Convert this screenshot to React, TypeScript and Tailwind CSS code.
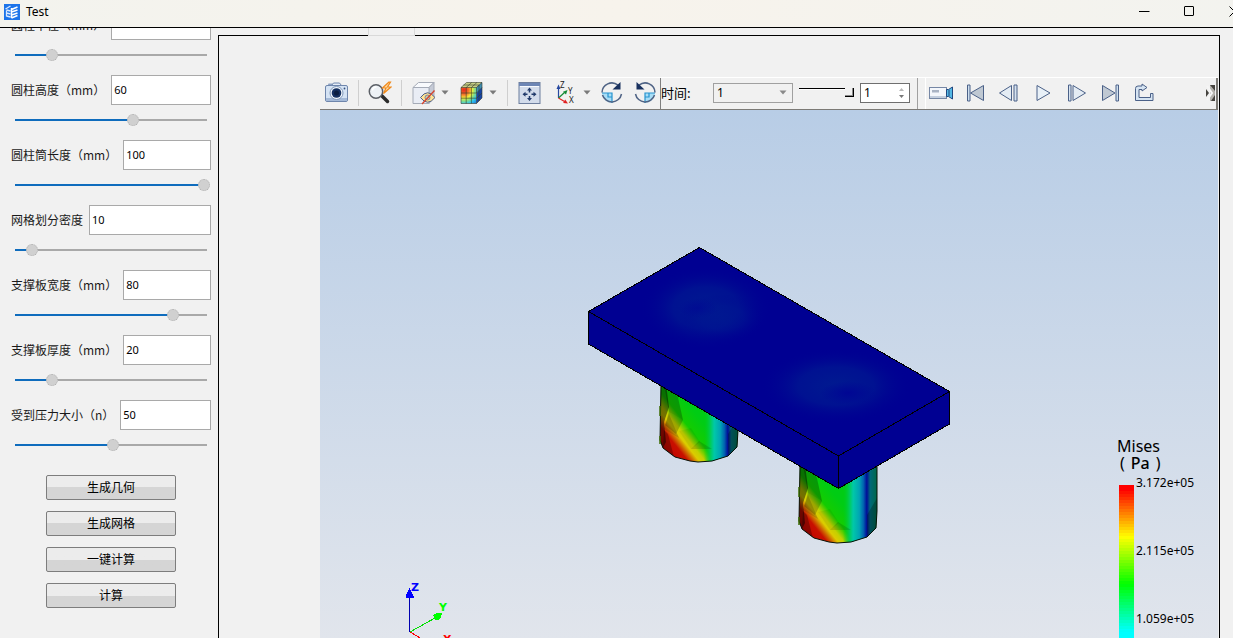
import { useState } from 'react';
import type { ReactNode } from 'react';

const params = [
  { id: 'radius', label: '圆柱半径（mm）', value: '', percent: 17 },
  { id: 'height', label: '圆柱高度（mm）', value: '60', percent: 61 },
  { id: 'length', label: '圆柱筒长度（mm）', value: '100', percent: 100 },
  { id: 'density', label: '网格划分密度', value: '10', percent: 6 },
  { id: 'width', label: '支撑板宽度（mm）', value: '80', percent: 83 },
  { id: 'thickness', label: '支撑板厚度（mm）', value: '20', percent: 17 },
  { id: 'pressure', label: '受到压力大小（n）', value: '50', percent: 50 },
];

const actions = ['生成几何', '生成网格', '一键计算', '计算'];

const legendTicks = ['3.172e+05', '2.115e+05', '1.059e+05'];

function ParamRow({ id, label, value, percent }: (typeof params)[number]) {
  const [pos, setPos] = useState(percent);
  // keep the fill under the middle of the thumb
  const fill = `calc(6px + (100% - 12px) * ${pos / 100})`;

  return (
    <div className="h-[65px]">
      <div className="flex h-[30px] items-center gap-1.5 pr-[7px] pl-[11px]">
        <label htmlFor={id} className="text-xs leading-[14px] whitespace-nowrap text-[#1a1a1a]">
          {label}
        </label>
        <input
          id={id}
          type="text"
          defaultValue={value}
          className="h-full min-w-0 flex-1 border border-[#a9a9a9] bg-white px-0.5 pb-0.5 font-['Noto_Sans'] text-[11px] text-black outline-none"
        />
      </div>
      <div className="flex h-[30px] items-center pr-2 pl-[15px]">
        <input
          type="range"
          aria-label={label}
          value={pos}
          onChange={(e) => setPos(Number(e.target.value))}
          style={{
            backgroundImage: `linear-gradient(to right, #0f6cbd ${fill}, #a9a9a9 ${fill}, #a9a9a9 calc(100% - 3px), transparent calc(100% - 3px))`,
          }}
          className="h-3 w-full appearance-none bg-[length:100%_2px] bg-center bg-no-repeat [&::-webkit-slider-thumb]:size-3 [&::-webkit-slider-thumb]:appearance-none [&::-webkit-slider-thumb]:rounded-full [&::-webkit-slider-thumb]:border [&::-webkit-slider-thumb]:border-dotted [&::-webkit-slider-thumb]:border-[#b0b0b0] [&::-webkit-slider-thumb]:bg-[#d0d0d0]"
        />
      </div>
    </div>
  );
}

function ToolButton({ label, wide, children }: { label: string; wide?: boolean; children: ReactNode }) {
  return (
    <button type="button" aria-label={label} className={wide ? 'h-6 w-7 shrink-0' : 'size-6 shrink-0'}>
      <svg className="h-full w-full" viewBox={wide ? '0 0 28 24' : '0 0 24 24'} fill="none">
        {children}
      </svg>
    </button>
  );
}

function MenuArrow({ label }: { label: string }) {
  return (
    <button type="button" aria-label={label} className="w-[10px] shrink-0">
      <svg className="w-full" viewBox="0 0 10 5">
        <path d="M1.500 0.500h7L5 4.500z" fill="#7a7a7a" />
      </svg>
    </button>
  );
}

function Separator() {
  return <div className="h-[26px] w-px shrink-0 bg-[#cfcfcf]" />;
}

function ViewTools() {
  return (
    <div className="flex shrink-0 items-center gap-[9px] border-r border-[#7f7f7f] pr-0.5 pb-0.5 pl-[5px]">
      <ToolButton label="截图">
        <rect x="3" y="2.500" width="5" height="3" rx="1" fill="#8fa3c4" />
        <rect x="0.500" y="4.500" width="22" height="16" rx="1.500" fill="#d5e3f4" stroke="#6f86ac" />
        <path d="M6.500 4.500l2-2.500h6l2 2.500z" fill="#e5edf8" stroke="#6f86ac" />
        <path d="M1 17h21v3H1z" fill="#a5bad8" />
        <circle cx="11.500" cy="12" r="6.500" fill="#f2f7fc" stroke="#7f96b8" />
        <circle cx="11.500" cy="12" r="4.800" fill="#142f60" />
        <circle cx="11.500" cy="12" r="2.500" fill="#0a1d40" />
        <circle cx="19.500" cy="7.500" r="0.900" fill="#35507d" />
      </ToolButton>
      <Separator />
      <ToolButton label="缩放">
        <path d="M13 14l6.500 6.500" stroke="#2b2b2b" strokeWidth="3.500" strokeLinecap="round" />
        <circle cx="8" cy="10.500" r="6.700" fill="#eef2f6" stroke="#5b5f66" strokeWidth="1.500" />
        <path d="M4.500 9.500a4 4 0 0 1 4-3.500" stroke="#fff" strokeWidth="1.500" />
        <path d="M21 1l-6.500 6h3.500l-2.500 5.500L23 6h-3.500L22.500 1z" fill="#ffd9a0" stroke="#f08a1c" strokeWidth="1.200" />
      </ToolButton>
      <Separator />
      <div className="flex items-center gap-[5px]">
        <ToolButton label="隐藏">
          <path d="M2 6.500L7.500 1.500H23L18 6.500z" fill="#f8fafd" stroke="#a5abb7" />
          <path d="M18 6.500l5-5V16l-5 6.500z" fill="#c5cad6" stroke="#a5abb7" />
          <path d="M2 6.500h16v16H2z" fill="#e9edf5" stroke="#a5abb7" />
          <path d="M9.500 16.500q7-9.500 14.500 0q-7.500 9.500-14.500 0z" fill="#ffe394" stroke="#4e5f8a" />
          <circle cx="16.500" cy="16.500" r="2.500" fill="#c3c9b4" stroke="#6a7590" strokeWidth="0.800" />
          <path d="M23.500 9.500L11 23" stroke="#d8432b" strokeWidth="1.300" />
        </ToolButton>
        <MenuArrow label="隐藏选项" />
      </div>
      <div className="flex items-center gap-[5px]">
        <ToolButton label="云图">
          <defs>
            <radialGradient id="cubeFace" gradientUnits="userSpaceOnUse" cx="5" cy="9" r="18">
              <stop offset="0" stopColor="#e8251d" />
              <stop offset="0.250" stopColor="#f6722a" />
              <stop offset="0.450" stopColor="#f4ef3a" />
              <stop offset="0.600" stopColor="#8fe07a" />
              <stop offset="0.780" stopColor="#2fc5ec" />
              <stop offset="1" stopColor="#1a74dd" />
            </radialGradient>
          </defs>
          <path d="M2 6.500L7.500 1.500H23L17.500 6.500z" fill="#c8cf86" />
          <path d="M17.500 6.500L23 1.500V17l-5.500 5.500z" fill="#1745a8" />
          <path d="M17.500 6.500L23 1.500v5l-5.500 6z" fill="#3f8fb3" />
          <path d="M2 6.500h15.500v16H2z" fill="url(#cubeFace)" />
          <path
            d="M2 6.500h15.500v16H2zM2 12h15.500L23 6.500M2 17.200h15.500L23 12M7.200 22.500v-16l5.500-5M12.400 22.500v-16l5.500-5M2 6.500l5.500-5H23V17l-5.500 5.500M17.500 6.500l5.500-5M4.500 4h15.500v16"
            stroke="#343a28"
            strokeWidth="0.600"
          />
        </ToolButton>
        <MenuArrow label="云图选项" />
      </div>
      <Separator />
      <ToolButton label="适应窗口">
        <rect x="2" y="1.500" width="21" height="21" fill="#d3dceb" stroke="#6d7e9e" />
        <path d="M2 2h21v3H2z" fill="#6d86b5" />
        <path d="M3 5.500h19" stroke="#f6f9fd" />
        <path d="M12.500 6.500l2.500 3h-5zM12.500 20l2.500-3h-5zM5.500 13.200l3-2.500v5zM19.500 13.200l-3-2.500v5z" fill="#213a6b" />
        <path d="M12.500 9v2.500M12.500 15v2.500M8 13.200h2.500M14.500 13.200H17" stroke="#213a6b" strokeWidth="1.500" />
      </ToolButton>
      <div className="flex items-center gap-[4px]">
        <ToolButton label="视图方向" wide>
          <path d="M8.500 17V7" stroke="#2748a0" strokeWidth="1.200" />
          <path d="M8.500 3.500l2 4.500h-4z" fill="#2748a0" />
          <path d="M8.500 17l6-5.500" stroke="#138a35" strokeWidth="1.200" />
          <path d="M17.500 9l-1.500 4.500-3-2.800z" fill="#138a35" />
          <path d="M8.500 17l6 3.500" stroke="#e02020" strokeWidth="1.200" />
          <path d="M18 22.500l-4.800-.5 2-3.500z" fill="#e02020" />
          <g fill="#222" className="font-['Noto_Sans'] text-[8px]">
            <text x="10" y="7">Z</text>
            <text x="18" y="13">Y</text>
            <text x="19" y="22">X</text>
          </g>
        </ToolButton>
        <MenuArrow label="视图选项" />
      </div>
      <ToolButton label="顺时针旋转">
        <path d="M1 12h10v10A10 10 0 0 1 1 12z" fill="#a8ddf6" />
        <path d="M1 12h10v10M7 12v4h4" stroke="#2694cf" strokeWidth="1.200" />
        <path d="M1 11.500A9.800 9.800 0 0 1 17 4.200M20.500 13A9.800 9.800 0 0 1 1.500 14" stroke="#4f6385" strokeWidth="1.500" />
        <path d="M19.500 1v7.500h-8z" fill="#19315f" />
      </ToolButton>
      <ToolButton label="逆时针旋转">
        <path d="M21 12H11v10A10 10 0 0 0 21 12z" fill="#a8ddf6" />
        <path d="M21 12H11v10M15 12v4h-4" stroke="#2694cf" strokeWidth="1.200" />
        <path d="M21 11.500A9.800 9.800 0 0 0 5 4.200M1.500 13A9.800 9.800 0 0 0 20.500 14" stroke="#4f6385" strokeWidth="1.500" />
        <path d="M2.500 1v7.500h8z" fill="#19315f" />
      </ToolButton>
    </div>
  );
}

function TimeTools() {
  return (
    <div className="flex shrink-0 items-center border-r border-[#a0a0a0] pr-[7px] pb-0.5">
      <label htmlFor="time" className="w-[52px] text-[13px] text-black">
        时间:
      </label>
      <div className="relative">
        <select
          id="time"
          className="block h-5 w-20 appearance-none border border-[#a0a0a0] bg-[#f1f1f1] px-[3px] font-['Noto_Sans'] text-xs leading-none text-black"
        >
          <option>1</option>
        </select>
        <svg className="pointer-events-none absolute top-[7px] right-[6px] h-[5px] w-[8px]" viewBox="0 0 8 5">
          <path d="M0.500 0.500h7L4 4.500z" fill="#8a8a8a" />
        </svg>
      </div>
      <input
        type="range"
        aria-label="时间步"
        defaultValue={100}
        className="mx-1.5 h-[9px] w-[55px] appearance-none bg-[linear-gradient(to_bottom,#000_1px,#fff_1px,#fff_2px,transparent_2px)] [&::-webkit-slider-thumb]:size-[9px] [&::-webkit-slider-thumb]:appearance-none [&::-webkit-slider-thumb]:border-r [&::-webkit-slider-thumb]:border-b [&::-webkit-slider-thumb]:border-black [&::-webkit-slider-thumb]:bg-[#f1f1f1] [&::-webkit-slider-thumb]:shadow-[inset_-1px_-1px_0_#8a8a8a]"
      />
      <div className="relative">
        <input
          type="text"
          aria-label="帧"
          defaultValue="1"
          className="block h-5 w-[50px] border border-[#6f6f6f] bg-white px-[3px] font-['Noto_Sans'] text-xs text-black outline-none"
        />
        <svg className="pointer-events-none absolute top-1 right-1.5 h-3 w-[5px]" viewBox="0 0 5 12">
          <path d="M2.500 1L5 4H0z" fill="#b9b9b9" />
          <path d="M2.500 11L5 8H0z" fill="#777" />
        </svg>
      </div>
    </div>
  );
}

function PlayTools() {
  const line = '#4b6188';
  return (
    <div className="ml-[7px] flex min-w-0 flex-1 items-center gap-[10px] overflow-hidden border-r-2 border-l border-r-[#7c7a76] border-l-white pb-0.5 pl-[3px]">
      <ToolButton label="录制">
        <rect x="0.500" y="6.500" width="17" height="11" fill="#f3f6fb" stroke="#7687a5" />
        <path d="M1 15h16v2H1z" fill="#c3cede" />
        <path d="M3 9h7v2.500H3z" fill="#a9b3c4" />
        <path d="M17.500 8.500h2L23.500 6v12l-4-2.500h-2z" fill="#54b8e4" stroke="#21477f" />
        <path d="M20 9v6" stroke="#21477f" />
      </ToolButton>
      <ToolButton label="第一帧">
        <path d="M4.500 4v16h2.500V4z" fill="#cfe0ef" stroke={line} />
        <path d="M20.500 4.500v15L7.500 12z" fill="#bfc8d2" stroke={line} />
      </ToolButton>
      <ToolButton label="上一帧">
        <path d="M14.500 4.500v15L2.500 12z" fill="#e4ecf4" stroke={line} />
        <path d="M17 4v16h3V4z" fill="#d7e3f0" stroke={line} />
      </ToolButton>
      <ToolButton label="播放">
        <path d="M6 4.500v15L19 12z" fill="#e9f1f8" stroke={line} />
      </ToolButton>
      <ToolButton label="下一帧">
        <path d="M3.500 4v16h2.500V4z" fill="#d7e3f0" stroke={line} />
        <path d="M8 4.500v15L20.500 12z" fill="#e4ecf4" stroke={line} />
      </ToolButton>
      <ToolButton label="最后一帧">
        <path d="M3.500 4.500v15L16 12z" fill="#bfc8d2" stroke={line} />
        <path d="M17 4v16h2.500V4z" fill="#cfe0ef" stroke={line} />
      </ToolButton>
      <ToolButton label="循环">
        <path
          d="M2.500 19.500v-12q0-2.500 2.500-2.500h4V3l5 3.500-5 3.500V8.500H6v8h11.500v-4H20v7z"
          fill="#d6e4f2"
          stroke={line}
          strokeLinejoin="round"
        />
      </ToolButton>
      <button type="button" aria-label="更多" className="mr-px ml-auto h-4 w-[9px] shrink-0">
        <svg className="h-full w-full" viewBox="0 0 9 16">
          <path d="M4 0h5v16H4z" fill="#b5b3ae" />
          <path d="M0 4l3 4-3 4zM4 0h5v6zM5 16l4-6v6z" fill="#45433f" />
          <path d="M1 1l5 7-5 7" fill="none" stroke="#f5f5f5" strokeWidth="2" />
        </svg>
      </button>
    </div>
  );
}

// Supporting column, drawn with its bottom left corner at 0,0
function Column({ x, y }: { x: number; y: number }) {
  const outline = 'M1-78L0-22L3-14L15-5L30-1L38 0L52-1L68-6L77-15L78-32V-78z';
  return (
    <g transform={`translate(${x} ${y})`}>
      <path d={outline} fill="url(#stress)" />
      <path d="M44-78V0L52-1L68-6L77-15L78-32V-78z" fill="url(#coolSide)" />
      <g fill="#000">
        <path d="M1-78h5L9-55L4-40L6-20L3-14L0-22z" opacity="0.450" />
        <path d="M4-78h11L23-42L9-50z" opacity="0.250" />
        <path d="M9-50L23-42L16-28L5-37z" opacity="0.200" />
        <path d="M9-48L19-24L4-33z" opacity="0.150" />
        <path d="M4-32L8-28L14-5L3-14z" opacity="0.280" />
        <path d="M19-31L31-13L40-20L31-34z" opacity="0.060" />
        <path d="M39-21L31-13L52-13z" opacity="0.140" />
        <path d="M68-28L78-45V-32L77-15L68-6z" opacity="0.250" />
      </g>
      <path d={outline} fill="none" stroke="#061206" strokeWidth="1" />
      <path d="M0-56v10M0-26v8" stroke="#3d6b00" strokeWidth="1.500" />
    </g>
  );
}

function Scene() {
  return (
    <svg
      className="absolute inset-0 h-full w-full"
      viewBox="320 110 898 528"
      preserveAspectRatio="xMinYMin slice"
      role="img"
      aria-label="Mises"
    >
      <defs>
        <linearGradient id="stress" gradientUnits="userSpaceOnUse" x1="6" y1="-4" x2="46" y2="-36">
          <stop offset="0" stopColor="#c00000" />
          <stop offset="0.300" stopColor="#c81000" />
          <stop offset="0.390" stopColor="#d07000" />
          <stop offset="0.470" stopColor="#dccc00" />
          <stop offset="0.560" stopColor="#c4d000" />
          <stop offset="0.720" stopColor="#14cc00" />
          <stop offset="1" stopColor="#00cc14" />
        </linearGradient>
        <linearGradient id="coolSide" gradientUnits="userSpaceOnUse" x1="44" y1="0" x2="78" y2="0">
          <stop offset="0" stopColor="#00cc20" stopOpacity="0" />
          <stop offset="0.200" stopColor="#00cc60" />
          <stop offset="0.300" stopColor="#00c8a8" />
          <stop offset="0.480" stopColor="#00a4b4" />
          <stop offset="0.600" stopColor="#0064b0" />
          <stop offset="0.700" stopColor="#000c98" />
          <stop offset="0.800" stopColor="#006878" />
          <stop offset="1" stopColor="#006848" />
        </linearGradient>
        <radialGradient id="spot">
          <stop offset="0" stopColor="#001a90" />
          <stop offset="0.500" stopColor="#001691" stopOpacity="0.800" />
          <stop offset="1" stopColor="#000092" stopOpacity="0" />
        </radialGradient>
        <radialGradient id="core">
          <stop offset="0" stopColor="#000694" />
          <stop offset="1" stopColor="#000694" stopOpacity="0" />
        </radialGradient>
      </defs>

      <Column x={660} y={462} />
      <Column x={799} y={543} />

      {/* plate */}
      <path d="M699.500 247.500L949.500 391.500V424L838.500 488.500L588.500 344V311.500z" fill="#000092" />
      <ellipse cx="706" cy="308" rx="66" ry="42" fill="url(#spot)" />
      <ellipse cx="836" cy="386" rx="76" ry="38" fill="url(#spot)" />
      <ellipse cx="722" cy="318" rx="44" ry="24" fill="url(#spot)" opacity="0.500" />
      <ellipse cx="698" cy="308" rx="20" ry="10" fill="url(#core)" opacity="0.600" />
      <ellipse cx="848" cy="393" rx="28" ry="12" fill="url(#core)" />
      <g fill="none" stroke="#000" shapeRendering="crispEdges">
        <path d="M699.500 247.500L949.500 391.500V424L838.500 488.500L588.500 344V311.500z" />
        <path d="M588.500 311.500L838.500 456L949.500 391.500M838.500 456v32" />
      </g>

      {/* orientation triad */}
      <g shapeRendering="crispEdges">
        <path d="M409.500 632V597" stroke="#0000b0" />
        <path d="M409.500 588l4 8v2h-8v-2z" fill="#0000ff" />
        <path d="M410 632l25-14" stroke="#00e000" />
        <path d="M433 615l4-2 5 0-1 5-3 2h-3z" fill="#00ff00" />
        <path d="M410 632l12 7" stroke="#ff0000" />
      </g>
      <g className="font-['DejaVu_Sans'] text-[11px] font-bold">
        <text x="411" y="591" fill="#0000ff">Z</text>
        <text x="439" y="611" fill="#00ff00">Y</text>
        <text x="443" y="643" fill="#ff0000">X</text>
      </g>
    </svg>
  );
}

function Legend() {
  return (
    <div className="absolute top-[328px] right-[21px] w-[80px] font-['Noto_Sans','Noto_Sans_CJK_SC',sans-serif] text-black">
      <div className="text-base leading-[17px]">
        <p>Mises</p>
        <p className="flex gap-1.5 pl-[3px]">
          <span>(</span>
          <span className="font-medium">Pa</span>
          <span>)</span>
        </p>
      </div>
      <div className="flex gap-0.5 pt-px pl-0.5">
        <svg className="mt-3 h-[153px] w-[15px]" viewBox="0 0 15 153" shapeRendering="crispEdges">
          {Array.from({ length: 51 }, (_, i) => (
            <rect key={i} y={i * 3} width="15" height="3" fill={`hsl(${Math.min(180, Math.max(0, i - 1) * 3.8)} 100% 50%)`} />
          ))}
        </svg>
        <ul className="text-xs">
          {legendTicks.map((tick) => (
            <li key={tick} className="h-[68px] leading-5">
              {tick}
            </li>
          ))}
        </ul>
      </div>
    </div>
  );
}

function TitleBar() {
  return (
    <header className="flex h-7 shrink-0 items-center overflow-hidden border-b border-black bg-linear-to-r from-[#f3f3ee] via-[#f7f3ec] to-[#f3f3ef] pl-1">
      <svg className="-mt-1 size-4" viewBox="0 0 16 16" fill="none">
        <rect width="16" height="16" fill="#1c74ea" />
        <path d="M1.500 5l5-3M2.500 6.500v6M2.500 6l4 1M2.500 9l4 1M2.500 12l4 1" stroke="#d9e9ff" strokeWidth="1.300" />
        <path d="M7.500 5.500l6-2.500M7.500 8l6-2M7.500 11l6-2M7.500 14l6-2.500M7.500 4v10" stroke="#fff" strokeWidth="1.500" />
      </svg>
      <h1 className="-mt-1 ml-1.5 font-['Noto_Sans'] text-xs leading-[14px] text-black">Test</h1>
      <div className="-mt-1 -mr-6 ml-auto flex">
        <button type="button" aria-label="最小化" className="flex w-[45px] justify-center">
          <svg className="size-[11px]" viewBox="0 0 11 11">
            <path d="M0 5.500h10.500" stroke="#000" />
          </svg>
        </button>
        <button type="button" aria-label="最大化" className="flex w-[45px] justify-center">
          <svg className="size-[11px]" viewBox="0 0 11 11">
            <rect x="0.500" y="0.500" width="9" height="9" rx="0.500" fill="none" stroke="#000" />
          </svg>
        </button>
        <button type="button" aria-label="关闭" className="flex w-[45px] justify-center">
          <svg className="size-[11px]" viewBox="0 0 11 11">
            <path d="M0.500 0.500l10 10M10.500 0.500l-10 10" stroke="#000" />
          </svg>
        </button>
      </div>
    </header>
  );
}

export default function App() {
  return (
    <div className="flex h-screen flex-col overflow-hidden bg-[#f1f1f1] font-['Noto_Sans_CJK_SC',sans-serif]">
      <TitleBar />
      <div className="flex min-h-0 flex-1">
        {/* parameters, scrolled a little way down */}
        <aside className="w-[218px] shrink-0 overflow-hidden">
          <div className="-mt-[18px]">
            {params.map((param) => (
              <ParamRow key={param.id} {...param} />
            ))}
          </div>
          <div className="flex flex-col items-center gap-[11px] pt-2.5 pl-1">
            {actions.map((action) => (
              <button
                key={action}
                type="button"
                className="h-[25px] w-[130px] rounded-xs border border-[#7d7d7d] bg-linear-to-b from-[#ececec] from-50% to-[#d5d5d5] to-50% pb-px text-xs text-black"
              >
                {action}
              </button>
            ))}
          </div>
        </aside>

        <main className="flex min-w-0 flex-1 flex-col pr-[13px]">
          <div className="z-10 -mb-px ml-[150px] h-2 w-[47px] shrink-0 border border-t-0 border-[#d9d9d9] bg-[#f1f1f1]" />
          <section className="flex min-h-0 flex-1 flex-col border border-b-0 border-black pt-[41px] pr-px pl-[101px]">
            <div className="flex h-[33px] shrink-0 border-t border-b border-t-white border-b-[#7c7a76]">
              <ViewTools />
              <TimeTools />
              <PlayTools />
            </div>
            <div className="relative min-h-0 flex-1 overflow-hidden bg-linear-to-b from-[#b8cde6] to-[#e1e5ec]">
              <Scene />
              <Legend />
            </div>
          </section>
        </main>
      </div>
    </div>
  );
}
